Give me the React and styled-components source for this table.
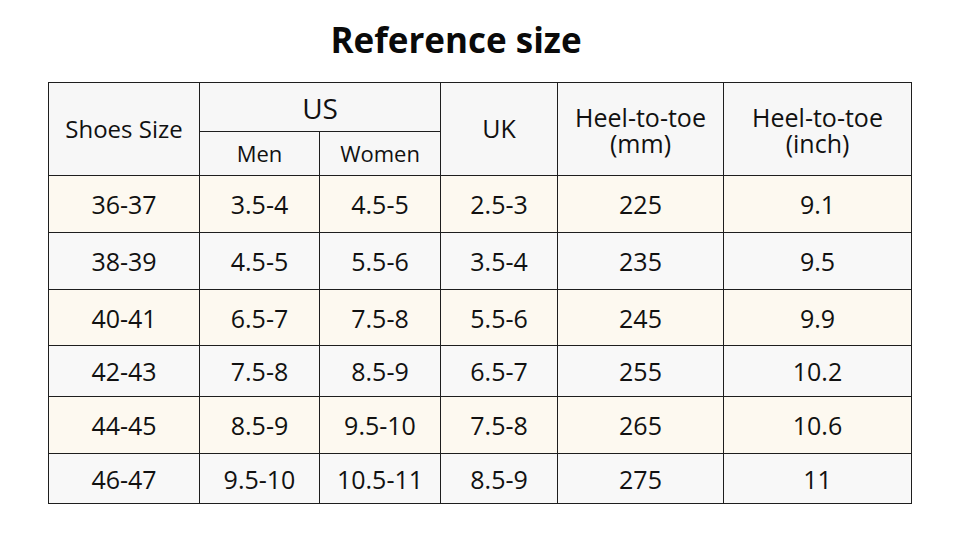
import React from "react";
import styled, { createGlobalStyle } from "styled-components";

const rows = [
  { eu: "36-37", men: "3.5-4", women: "4.5-5", uk: "2.5-3", mm: "225", inch: "9.1", h: 57 },
  { eu: "38-39", men: "4.5-5", women: "5.5-6", uk: "3.5-4", mm: "235", inch: "9.5", h: 57 },
  { eu: "40-41", men: "6.5-7", women: "7.5-8", uk: "5.5-6", mm: "245", inch: "9.9", h: 56 },
  { eu: "42-43", men: "7.5-8", women: "8.5-9", uk: "6.5-7", mm: "255", inch: "10.2", h: 51 },
  { eu: "44-45", men: "8.5-9", women: "9.5-10", uk: "7.5-8", mm: "265", inch: "10.6", h: 57 },
  { eu: "46-47", men: "9.5-10", women: "10.5-11", uk: "8.5-9", mm: "275", inch: "11", h: 50 },
];

export default function App() {
  return (
    <>
      <GlobalStyle />
      <Page>
        <Title>Reference size</Title>
        <SizeTable>
          <colgroup>
            <col style={{ width: 151 }} />
            <col style={{ width: 120 }} />
            <col style={{ width: 121 }} />
            <col style={{ width: 117 }} />
            <col style={{ width: 166 }} />
            <col style={{ width: 188 }} />
          </colgroup>
          <thead>
            <HeadRow $h={49}>
              <HeadCell rowSpan={2} $size={24}>Shoes Size</HeadCell>
              <HeadCell colSpan={2} $size={28} $drop={3}>US</HeadCell>
              <HeadCell rowSpan={2} $size={25}>UK</HeadCell>
              <HeadCell rowSpan={2} $size={25}>
                <Stack>Heel-to-toe<br />(mm)</Stack>
              </HeadCell>
              <HeadCell rowSpan={2} $size={25}>
                <Stack>Heel-to-toe<br />(inch)</Stack>
              </HeadCell>
            </HeadRow>
            <HeadRow $h={44}>
              <HeadCell $size={22}>Men</HeadCell>
              <HeadCell $size={22}>Women</HeadCell>
            </HeadRow>
          </thead>
          <tbody>
            {rows.map((r, i) => (
              <BodyRow key={r.eu} $h={r.h} $cream={i % 2 === 0}>
                <Cell>{r.eu}</Cell>
                <Cell>{r.men}</Cell>
                <Cell>{r.women}</Cell>
                <Cell>{r.uk}</Cell>
                <Cell>{r.mm}</Cell>
                <Cell>{r.inch}</Cell>
              </BodyRow>
            ))}
          </tbody>
        </SizeTable>
      </Page>
    </>
  );
}

// Styles
const GlobalStyle = createGlobalStyle`
  body {
    margin: 0;
    background: #ffffff;
    font-family: "Open Sans", "Noto Sans", sans-serif;
    color: #111111;
  }
`;

const Page = styled.div`
  width: 960px;
  height: 542px;
  padding: 17px 0 0 48px;
  box-sizing: border-box;
`;

const Title = styled.h1`
  margin: 0;
  width: 863px;
  padding-right: 47px;
  box-sizing: border-box;
  text-align: center;
  font-size: 35px;
  font-weight: 700;
  line-height: 46px;
  height: 65px;
  color: #0a0a0a;
`;

const SizeTable = styled.table`
  border-collapse: collapse;
  table-layout: fixed;
  width: 863px;
`;

const HeadRow = styled.tr`
  height: ${(p) => p.$h}px;
  background: #f7f7f7;
`;

const HeadCell = styled.th`
  border: 1px solid #1e1e1e;
  padding: ${(p) => p.$drop || 0}px 0 0;
  font-weight: 400;
  font-size: ${(p) => p.$size}px;
  text-align: center;
  vertical-align: middle;
  line-height: 1.1;
`;

const Stack = styled.span`
  display: inline-block;
  line-height: 26px;
  margin-top: 3px;
`;

const BodyRow = styled.tr`
  height: ${(p) => p.$h}px;
  background: ${(p) => (p.$cream ? "#fdf9f0" : "#f8f8f8")};
`;

const Cell = styled.td`
  border: 1px solid #1e1e1e;
  padding: 0;
  font-size: 25px;
  text-align: center;
  vertical-align: middle;
`;
